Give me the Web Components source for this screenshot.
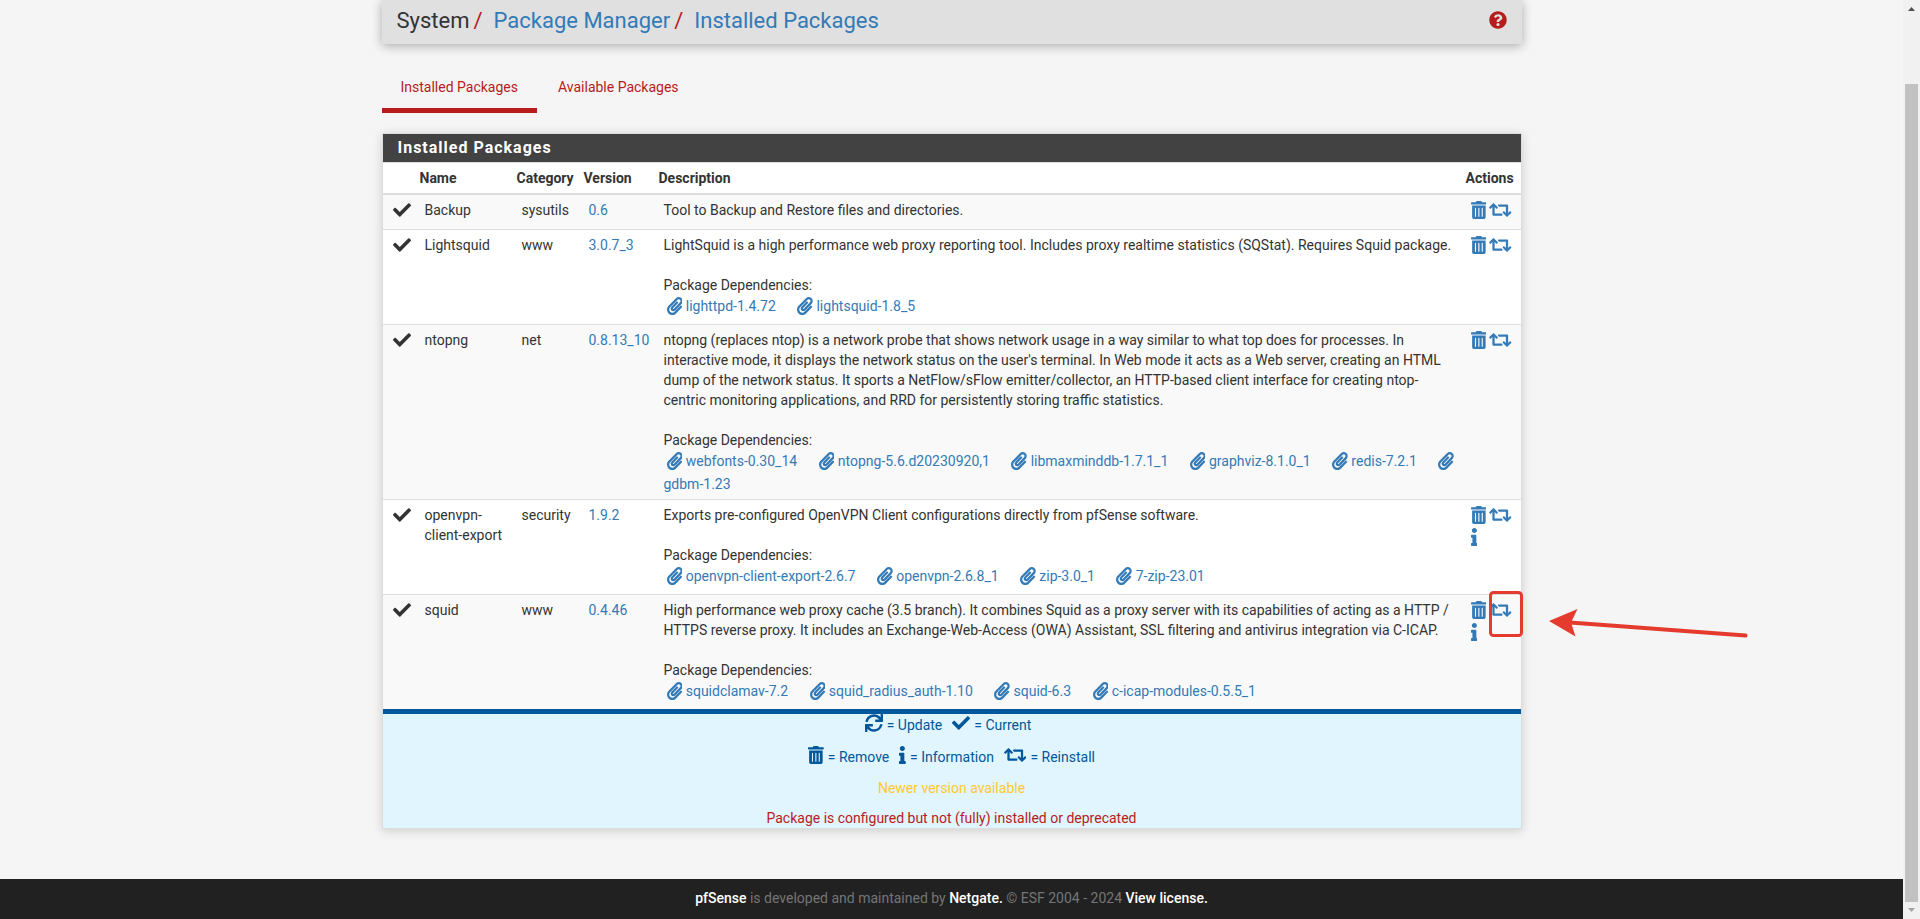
<!DOCTYPE html>
<html lang="en">
<head>
<meta charset="utf-8">
<meta name="viewport" content="width=device-width, initial-scale=1">
<title>System: Package Manager: Installed Packages</title>
<style>
html, body { margin: 0; }
body { background: #f5f5f5; color: #333; font: 14px/20px Roboto, sans-serif; }
</style>
</head>
<body>
<pkg-page>
  <page-header slot="content"></page-header>
  <page-tabs slot="content"></page-tabs>
  <page-panel slot="content">
    <span slot="title">Installed Packages</span>
    <package-table></package-table>
    <package-legend></package-legend>
  </page-panel>
  <page-footer slot="footer"></page-footer>
</pkg-page>

<script>
const ICONS = {
  check: [512, 'M173.898 439.404l-166.4-166.4c-9.997-9.997-9.997-26.206 0-36.204l36.203-36.204c9.997-9.998 26.207-9.998 36.204 0L192 312.69 432.095 72.596c9.997-9.997 26.207-9.997 36.204 0l36.203 36.204c9.997 9.997 9.997 26.206 0 36.204l-294.4 294.401c-9.998 9.997-26.207 9.997-36.204-.001z'],
  trash: [448, 'M32 464a48 48 0 0 0 48 48h288a48 48 0 0 0 48-48V128H32zm272-256a16 16 0 0 1 32 0v224a16 16 0 0 1-32 0zm-96 0a16 16 0 0 1 32 0v224a16 16 0 0 1-32 0zm-96 0a16 16 0 0 1 32 0v224a16 16 0 0 1-32 0zM432 32H312l-9.4-18.7A24 24 0 0 0 281.1 0H166.8a23.72 23.72 0 0 0-21.4 13.3L136 32H16A16 16 0 0 0 0 48v32a16 16 0 0 0 16 16h416a16 16 0 0 0 16-16V48a16 16 0 0 0-16-16z'],
  retweet: [640, 'M629.657 343.598L528.971 444.284c-9.373 9.372-24.568 9.372-33.941 0L394.343 343.598c-9.373-9.373-9.373-24.569 0-33.941l10.823-10.823c9.562-9.562 25.133-9.34 34.419.492L480 342.118V160H292.451a24.005 24.005 0 0 1-16.971-7.029l-16-16C244.361 121.851 255.069 96 276.451 96H520c13.255 0 24 10.745 24 24v222.118l40.416-42.792c9.285-9.831 24.856-10.054 34.419-.492l10.823 10.823c9.372 9.372 9.372 24.569-.001 33.941zm-265.138 15.431A23.999 23.999 0 0 0 347.548 352H160V169.881l40.416 42.792c9.286 9.831 24.856 10.054 34.419.491l10.822-10.822c9.373-9.373 9.373-24.569 0-33.941L144.971 67.716c-9.373-9.373-24.569-9.373-33.941 0L10.343 168.402c-9.373 9.373-9.373 24.569 0 33.941l10.822 10.822c9.562 9.562 25.133 9.34 34.419-.491L96 169.881V392c0 13.255 10.745 24 24 24h243.549c21.382 0 32.09-25.851 16.971-40.971l-16.001-16z'],
  info: [192, 'M20 424.229h20V279.771H20c-11.046 0-20-8.954-20-20V212c0-11.046 8.954-20 20-20h112c11.046 0 20 8.954 20 20v212.229h20c11.046 0 20 8.954 20 20V492c0 11.046-8.954 20-20 20H20c-11.046 0-20-8.954-20-20v-47.771c0-11.046 8.954-20 20-20zM96 0C56.235 0 24 32.235 24 72s32.235 72 72 72 72-32.235 72-72S135.764 0 96 0z'],
  clip: [448, 'M43.246 466.142c-58.43-60.289-57.341-157.511 1.386-217.581L254.392 34c44.316-45.332 116.351-45.336 160.671 0 43.89 44.894 43.943 117.329 0 162.276L232.214 383.128c-29.855 30.537-78.633 30.111-107.982-.998-28.275-29.97-27.368-77.473 1.452-106.953l143.743-146.835c6.182-6.314 16.312-6.422 22.626-.241l22.861 22.379c6.315 6.182 6.422 16.312.241 22.626L171.427 319.927c-4.932 5.045-5.236 13.428-.648 18.292 4.372 4.634 11.245 4.711 15.688.165l182.849-186.851c19.613-20.062 19.613-52.725-.011-72.798-19.189-19.627-49.957-19.637-69.154 0L90.39 293.295c-34.763 35.56-35.299 93.12-1.191 128.313 34.01 35.093 88.985 35.137 123.058.286l172.06-175.999c6.177-6.319 16.307-6.433 22.626-.256l22.877 22.364c6.319 6.177 6.434 16.307.256 22.626l-172.06 175.998c-59.576 60.938-155.943 60.216-214.77-.485z'],
  sync: [512, 'M440.65 12.57l4 82.77A247.16 247.16 0 0 0 255.83 8C134.73 8 33.91 94.92 12.29 209.82A12 12 0 0 0 24.09 224h49.05a12 12 0 0 0 11.67-9.26 175.91 175.91 0 0 1 317-56.94l-101.46-4.86a12 12 0 0 0-12.57 12v47.41a12 12 0 0 0 12 12H500a12 12 0 0 0 12-12V12a12 12 0 0 0-12-12h-47.37a12 12 0 0 0-11.98 12.57zM255.83 432a175.61 175.61 0 0 1-146-77.8l101.8 4.87a12 12 0 0 0 12.57-12v-47.4a12 12 0 0 0-12-12H12a12 12 0 0 0-12 12V500a12 12 0 0 0 12 12h47.35a12 12 0 0 0 12-12.6l-4.15-82.57A247.17 247.17 0 0 0 255.83 504c121.11 0 221.93-86.92 243.55-201.82a12 12 0 0 0-11.8-14.18h-49.05a12 12 0 0 0-11.67 9.26A175.86 175.86 0 0 1 255.83 432z'],
  help: [512, 'M504 256c0 136.997-111.043 248-248 248S8 392.997 8 256C8 119.083 119.043 8 256 8s248 111.083 248 248zM262.655 90c-54.497 0-89.255 22.957-116.549 63.758-3.536 5.286-2.353 12.415 2.715 16.258l34.699 26.31c5.205 3.947 12.621 3.008 16.665-2.122 17.864-22.658 30.113-35.797 57.303-35.797 20.429 0 45.698 13.148 45.698 32.958 0 14.976-12.363 22.667-32.534 33.976C247.128 238.528 216 254.941 216 296v4c0 6.627 5.373 12 12 12h56c6.627 0 12-5.373 12-12v-1.333c0-28.462 83.186-29.647 83.186-106.667 0-58.002-60.165-102-116.531-102zM256 338c-25.365 0-46 20.635-46 46 0 25.364 20.635 46 46 46s46-20.636 46-46c0-25.364-20.635-46-46-46z']
};

const define = (name, html) => customElements.define(name, class extends HTMLElement {
  constructor() {
    super();
    this.attachShadow({ mode: 'open' }).innerHTML = html;
  }
});

customElements.define('app-icon', class extends HTMLElement {
  connectedCallback() {
    if (this.shadowRoot) return;
    const [width, path] = ICONS[this.getAttribute('name')];
    this.attachShadow({ mode: 'open' }).innerHTML = `
      <style>
        :host { display: inline-block; }
        svg { display: block; height: 18px; fill: currentColor; }
      </style>
      <svg viewBox="0 0 ${width} 512" aria-hidden="true"><path d="${path}"/></svg>`;
  }
});

define('pkg-page', `
  <style>
    :host { display: grid; grid-template-columns: 1fr 17px; min-height: 100vh; }
    .page { display: flex; flex-direction: column; min-width: 0; }
    main { width: 100%; max-width: 1140px; margin: 0 auto; }
    footer { margin-top: auto; }
  </style>
  <div class="page">
    <main><slot name="content"></slot></main>
    <footer><slot name="footer"></slot></footer>
  </div>
  <scroll-rail></scroll-rail>`);

define('scroll-rail', `
  <style>
    :host { display: flex; flex-direction: column; align-items: center; background: #f1f1f1; }
    svg { display: block; width: 17px; height: 17px; fill: #505050; }
    .track { flex: 1; align-self: stretch; display: flex; flex-direction: column; padding: 0 2px; }
    .before { flex: 8; }
    .thumb { flex: 97; background: #c1c1c1; }
    .end { fill: #a3a3a3; }
  </style>
  <svg viewBox="0 0 17 17"><path d="M5 11h7L8.500 7z"/></svg>
  <div class="track"><div class="before"></div><div class="thumb"></div></div>
  <svg class="end" viewBox="0 0 17 17"><path d="M5 6h7l-3.500 4z"/></svg>`);

define('page-header', `
  <style>
    :host { display: block; background: #e0e0e0; box-shadow: 0 2px 10px rgba(0,0,0,.3); }
    header { display: flex; align-items: center; justify-content: space-between; padding: 5px 15px 7px; }
    ol { display: flex; margin: 0; padding: 0; list-style: none; font-size: 22px; line-height: 32px; }
    li + li::before { content: "/"; color: #b71c1c; padding: 0 11px 0 4px; }
    a { color: #337ab7; text-decoration: none; }
    .help { color: #b71c1c; padding-top: 3px; }
  </style>
  <header>
    <ol>
      <li>System</li>
      <li><a href="#manager">Package Manager</a></li>
      <li><a href="#installed">Installed Packages</a></li>
    </ol>
    <a class="help" href="#help" aria-label="Help"><app-icon name="help"></app-icon></a>
  </header>`);

define('page-tabs', `
  <style>
    :host { display: block; padding: 32px 0 20px; }
    nav { display: flex; gap: 2px; }
    a { padding: 1px 19px 11px; border-bottom: 5px solid transparent; color: #b71c1c; text-decoration: none; }
    a[aria-current] { border-color: #b71c1c; }
  </style>
  <nav>
    <a href="#installed" aria-current="page">Installed Packages</a>
    <a href="#available">Available Packages</a>
  </nav>`);

define('page-panel', `
  <style>
    :host { display: block; border: 1px solid #ddd; background: #fff; box-shadow: 0 2px 10px rgba(0,0,0,.16); }
    h2 { margin: 0; padding: 4px 15px; background: #424242; color: #fff; border-bottom: 1px solid #ddd;
         font-size: 16px; line-height: 20px; font-weight: 700; letter-spacing: 1px; }
  </style>
  <h2><slot name="title"></slot></h2>
  <slot></slot>`);

const PACKAGES = [
  { name: 'Backup', category: 'sysutils', version: '0.6',
    text: 'Tool to Backup and Restore files and directories.' },
  { name: 'Lightsquid', category: 'www', version: '3.0.7_3',
    text: 'LightSquid is a high performance web proxy reporting tool. Includes proxy realtime statistics (SQStat). Requires Squid package.',
    deps: ['lighttpd-1.4.72', 'lightsquid-1.8_5'] },
  { name: 'ntopng', category: 'net', version: '0.8.13_10',
    text: "ntopng (replaces ntop) is a network probe that shows network usage in a way similar to what top does for processes. In interactive mode, it displays the network status on the user's terminal. In Web mode it acts as a Web server, creating an HTML dump of the network status. It sports a NetFlow/sFlow emitter/collector, an HTTP-based client interface for creating ntop-centric monitoring applications, and RRD for persistently storing traffic statistics.",
    deps: ['webfonts-0.30_14', 'ntopng-5.6.d20230920,1', 'libmaxminddb-1.7.1_1', 'graphviz-8.1.0_1', 'redis-7.2.1', 'gdbm-1.23'] },
  { name: 'openvpn-client-export', category: 'security', version: '1.9.2', info: true,
    text: 'Exports pre-configured OpenVPN Client configurations directly from pfSense software.',
    deps: ['openvpn-client-export-2.6.7', 'openvpn-2.6.8_1', 'zip-3.0_1', '7-zip-23.01'] },
  { name: 'squid', category: 'www', version: '0.4.46', info: true, marked: true,
    text: 'High performance web proxy cache (3.5 branch). It combines Squid as a proxy server with its capabilities of acting as a HTTP / HTTPS reverse proxy. It includes an Exchange-Web-Access (OWA) Assistant, SSL filtering and antivirus integration via C-ICAP.',
    deps: ['squidclamav-7.2', 'squid_radius_auth-1.10', 'squid-6.3', 'c-icap-modules-0.5.5_1'] }
];

const dependency = d => `<a class="dep" href="#${d}"><app-icon name="clip"></app-icon> ${d}</a>`;

const row = p => `
  <tr>
    <td><app-icon class="state" name="check"></app-icon></td>
    <td>${p.name}</td>
    <td>${p.category}</td>
    <td><a href="#${p.name}-log">${p.version}</a></td>
    <td>${p.text}${p.deps ? `<div class="deps">Package Dependencies:<br>${p.deps.map(dependency).join(' ')}</div>` : ''}</td>
    <td><div class="actions">
      <a href="#remove" aria-label="Remove ${p.name}"><app-icon name="trash"></app-icon></a>
      <a href="#reinstall" aria-label="Reinstall ${p.name}"><app-icon name="retweet"></app-icon></a>
      ${p.info ? `<a href="#info" aria-label="Information on ${p.name}"><app-icon name="info"></app-icon></a>` : ''}
      ${p.marked ? '<callout-arrow></callout-arrow>' : ''}
    </div></td>
  </tr>`;

define('package-table', `
  <style>
    :host { display: block; }
    table { width: 100%; table-layout: fixed; border-collapse: separate; border-spacing: 0; }
    th { padding: 5px; border-bottom: 2px solid #ddd; text-align: left; font-weight: 700; }
    td { padding: 5px 5px 5px 10px; vertical-align: top; }
    td:first-child, td:nth-child(4), td:nth-child(5) { padding-right: 0; }
    tr + tr td { border-top: 1px solid #ddd; }
    tbody tr:nth-child(odd) { background: #f9f9f9; }
    a { color: #337ab7; text-decoration: none; }
    .state { display: block; padding-top: 1px; }
    .deps { padding-top: 20px; }
    .dep { margin-right: 15px; }
    .dep app-icon { height: 20px; padding: 2px 0 2px 3px; vertical-align: -8px; }
    .actions { position: relative; display: flex; flex-wrap: wrap; column-gap: 3px; min-height: 24px; align-content: flex-start; }
    .actions a { height: 22px; }
    .actions app-icon { display: block; padding-top: 1px; }
  </style>
  <table>
    <colgroup><col style="width:32px"><col style="width:97px"><col style="width:67px"><col style="width:75px"><col><col style="width:60px"></colgroup>
    <thead><tr><th></th><th>Name</th><th>Category</th><th>Version</th><th>Description</th><th>Actions</th></tr></thead>
    <tbody>${PACKAGES.map(row).join('')}</tbody>
  </table>`);

/* Highlight drawn over the page, anchored to the actions of one row. */
define('callout-arrow', `
  <style>
    :host { position: absolute; left: 17px; top: -10px; z-index: 1; pointer-events: none; }
    svg { display: block; width: 264px; height: 50px; }
  </style>
  <svg viewBox="0 0 264 50" aria-hidden="true">
    <rect x="2.500" y="2.500" width="31" height="43" rx="3" fill="none" stroke="#e53a2e" stroke-width="3"/>
    <path d="M82 32.500L257.500 45.500" fill="none" stroke="#e53a2e" stroke-width="4" stroke-linecap="round"/>
    <path d="M61 31L89.500 19L83 32.500L87.500 46.500z" fill="#e53a2e"/>
  </svg>`);

define('package-legend', `
  <style>
    :host { display: flex; flex-direction: column; align-items: center; border-top: 5px solid #01579b; background: #e1f5fe; color: #01579b; }
    div { display: flex; gap: 10px; }
    .icons { line-height: 22px; margin-bottom: 10px; }
    .status { padding-right: 7px; }
    span { display: flex; gap: 4px; }
    p { margin: 0 0 10px; }
    .new { color: #ffca28; }
    .bad { color: #b71c1c; margin-bottom: 0; }
  </style>
  <div class="icons status"><span><app-icon name="sync"></app-icon> = Update</span><span><app-icon name="check"></app-icon> = Current</span></div>
  <div class="icons"><span><app-icon name="trash"></app-icon> = Remove</span><span><app-icon name="info"></app-icon> = Information</span><span><app-icon name="retweet"></app-icon> = Reinstall</span></div>
  <p class="new">Newer version available</p>
  <p class="bad">Package is configured but not (fully) installed or deprecated</p>`);

define('page-footer', `
  <style>
    :host { display: block; padding: 9px 0 11px; background: #212121; color: #757575; text-align: center; }
    a { color: #fff; font-weight: 500; text-decoration: none; }
  </style>
  <a href="#pfsense">pfSense</a> is developed and maintained by <a href="#netgate">Netgate.</a> © ESF 2004 - 2024 <a href="#license">View license.</a>`);
</script>
</body>
</html>
